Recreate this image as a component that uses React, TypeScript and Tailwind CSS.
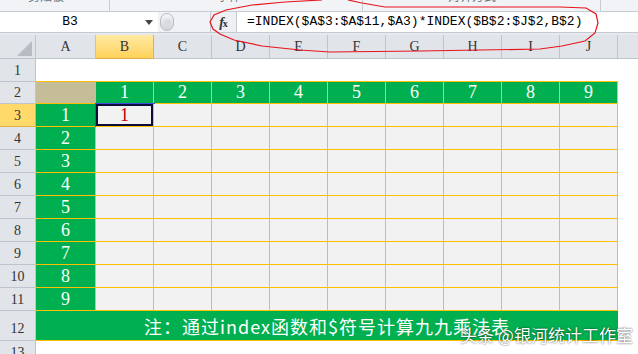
import React from "react"

const COLS = ["A", "B", "C", "D", "E", "F", "G", "H", "I", "J"]

function RowHead({ n, active, h, bottom }: { n: number; active?: boolean; h: string; bottom?: boolean }) {
  return (
    <div
      className={`${h} w-[36px] shrink-0 flex justify-center border-r border-b text-[14px] text-[#333] ${
        bottom ? "items-end pb-[1px]" : "items-center"
      } ${active ? "bg-[#ffd96a] border-[#e3b04c]" : "bg-[#e1e5ea] border-[#bfc4cb]"}`}
    >
      {n}
    </div>
  )
}

export default function App() {
  return (
    <div className="relative w-[638px] h-[354px] overflow-hidden bg-white font-['Liberation_Serif',serif]">
      {/* ribbon bottom edge */}
      <div className="flex h-[12px] bg-[#f1f3f6] border-b border-[#c6ccd4] text-[12px] text-[#6b737c] font-['Noto_Sans_CJK_SC',sans-serif] overflow-hidden">
        <div className="w-[110px] border-r border-[#c6ccd4] pl-[28px]">
          <span className="block -mt-[12px] leading-[16px]">剪贴板</span>
        </div>
        <div className="w-[253px] border-r border-[#c6ccd4] pl-[107px]">
          <span className="block -mt-[12px] leading-[16px]">字体</span>
        </div>
        <div className="w-[238px] border-r border-[#c6ccd4] pl-[85px]">
          <span className="block -mt-[12px] leading-[16px]">对齐方式</span>
        </div>
        <div className="flex-1" />
      </div>

      {/* formula bar */}
      <div className="flex h-[20px] bg-white">
        <div className="w-[140px] flex items-center justify-center font-['Liberation_Mono',monospace] text-[13px] text-black">
          B3
        </div>
        <div className="w-[18px] flex items-center justify-center">
          <svg width="8" height="5" viewBox="0 0 8 5">
            <polygon points="0,0 8,0 4,5" fill="#444" />
          </svg>
        </div>
        <div className="w-[52px] flex items-center bg-[#f0f2f5]">
          <div className="ml-[2px] w-[14px] h-[18px] rounded-full bg-gradient-to-b from-[#f4f5f7] to-[#cfd3d8] border border-[#b9bec5] flex items-center justify-center">
            <div className="w-[7px] h-[7px] rounded-full bg-[#d9dcdf]" />
          </div>
        </div>
        <div className="w-[27px] flex items-center justify-center bg-[#eef0f3] border-x border-[#c3c8cf] text-[#333] text-[14px] italic font-bold">
          f<span className="text-[10px] not-italic -ml-[1px] mt-[3px]">x</span>
        </div>
        <div className="flex-1 flex items-center pl-[10px] font-['Liberation_Mono',monospace] text-[13px] text-black">
          =INDEX($A$3:$A$11,$A3)*INDEX($B$2:$J$2,B$2)
        </div>
      </div>
      <div className="h-[3px] bg-[#e6e9ed] border-t border-[#c5cad0]" />

      {/* column headers */}
      <div className="flex h-[24px]">
        <div className="w-[36px] shrink-0 bg-[#e1e5ea] border-r border-b border-[#bfc4cb] flex items-end justify-end pr-[3px] pb-[2px]">
          <svg width="15" height="15" viewBox="0 0 15 15">
            <polygon points="15,0 15,15 0,15" fill="#b7bcc3" />
          </svg>
        </div>
        {COLS.map((c) => (
          <div
            key={c}
            className={`${c === "A" ? "w-[60px]" : "w-[58px]"} shrink-0 flex items-center justify-center border-r border-b text-[14px] text-[#333] ${
              c === "B"
                ? "bg-gradient-to-b from-[#ffe9a3] to-[#ffd257] border-[#e3b04c]"
                : "bg-[#e1e5ea] border-[#bfc4cb]"
            }`}
          >
            {c}
          </div>
        ))}
        <div className="flex-1 bg-[#e1e5ea] border-b border-[#bfc4cb]" />
      </div>

      {/* row 1 */}
      <div className="flex">
        <RowHead n={1} h="h-[23px]" />
        <div className="w-[582px] h-[23px] border-b border-[#ffc000]" />
      </div>

      {/* row 2 */}
      <div className="flex">
        <RowHead n={2} h="h-[22px]" />
        <div className="w-[60px] h-[22px] bg-[#c4bd97] border-r border-b border-[#ffc000]" />
        {[1, 2, 3, 4, 5, 6, 7, 8, 9].map((n) => (
          <div
            key={n}
            className="w-[58px] h-[22px] bg-[#00b050] border-r border-b border-[#ffc000] flex items-center justify-center text-white text-[18px]"
          >
            {n}
          </div>
        ))}
      </div>

      {/* rows 3-11 */}
      {[1, 2, 3, 4, 5, 6, 7, 8, 9].map((n) => (
        <div key={n} className="flex">
          <RowHead n={n + 2} h="h-[23px]" active={n === 1} />
          <div className="w-[60px] h-[23px] bg-[#00b050] border-r border-b border-[#ffc000] flex items-center justify-center text-white text-[18px]">
            {n}
          </div>
          {COLS.slice(1).map((c) => (
            <div
              key={c}
              className={`w-[58px] h-[23px] bg-[#f2f2f2] border-r border-b border-[#ffc000] flex items-center justify-center ${
                n === 1 && c === "B" ? "shadow-[inset_0_0_0_2px_#0d0d3c,0_0_0_1px_#3b4fd8] text-[#c00000] text-[18px]" : ""
              }`}
            >
              {n === 1 && c === "B" ? "1" : ""}
            </div>
          ))}
        </div>
      ))}

      {/* row 12 */}
      <div className="flex">
        <RowHead n={12} h="h-[30px]" bottom />
        <div className="w-[582px] h-[30px] bg-[#00b050] border-b border-[#ffc000] flex items-center justify-center pt-[2px] text-white text-[18px] tracking-[1px] font-['Noto_Sans_CJK_SC',sans-serif]">
          注：通过index函数和$符号计算九九乘法表
        </div>
      </div>

      {/* row 13 */}
      <div className="flex">
        <RowHead n={13} h="h-[23px]" />
      </div>

      {/* watermark */}
      <div className="absolute left-[460px] top-[323px] text-[17px] leading-[24px] text-white font-['Noto_Sans_CJK_SC',sans-serif] [text-shadow:0_0_2px_rgba(0,0,0,0.8)]">
        头条 @银河统计工作室
      </div>

      {/* red hand-drawn ellipse */}
      <svg className="absolute left-0 top-0 pointer-events-none" width="638" height="354" viewBox="0 0 638 354">
        <polyline
          points="322,0 285,2 252,5 226,10 214,15 210,22 213,29 220,34 234,40 262,46 300,50 330,52 420,51 540,49 562,46 585,41 595,33 598,23 596,14 586,8 560,7 385,7 362,3 348,0"
          fill="none"
          stroke="#e8141c"
          strokeWidth="1.2"
        />
      </svg>
    </div>
  )
}
